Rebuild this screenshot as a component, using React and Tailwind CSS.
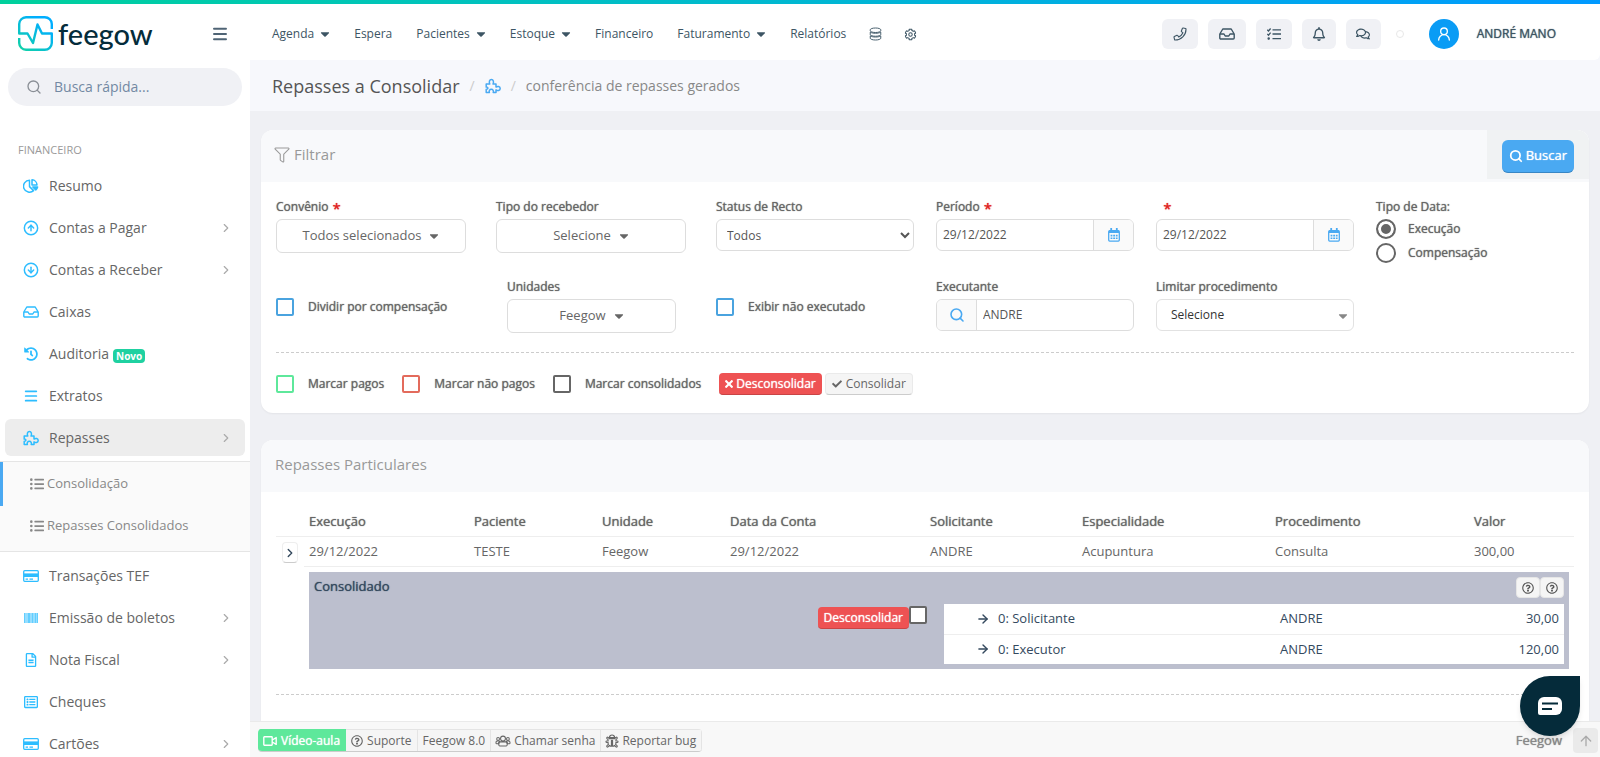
import { useState } from 'react';
import {
  FaBug,
  FaCheck,
  FaCog,
  FaDatabase,
  FaFilter,
  FaHistory,
  FaListUl,
  FaPhone,
  FaRegBell,
  FaRegComments,
  FaRegFileAlt,
  FaRegListAlt,
  FaRegQuestionCircle,
  FaTimes,
  FaUsers,
  FaCaretDown,
} from 'react-icons/fa';
import { ArrowRight, ArrowUp, ChevronRight, CircleArrowDown, CircleArrowUp, Menu, Search, UserRound } from 'lucide-react';

// Outlined version of a solid icon
function Outline({ icon: Icon, className, weight = 48 }) {
  return <Icon fill="none" strokeWidth={weight} className={`overflow-visible ${className}`} />;
}

function PieIcon({ className }) {
  return (
    <svg viewBox="0 0 16 14" className={className} fill="none" stroke="currentColor" strokeWidth="1.5" strokeLinejoin="round">
      <path d="M6.5 1.2A6 6 0 1 0 10.6 11.6L6.5 7.6Z" />
      <path d="M9 .8A5.3 5.3 0 0 1 14 6H9Z" />
      <path d="M9.8 8H14.6A6 6 0 0 1 12.8 11Z" fill="currentColor" />
    </svg>
  );
}

function PuzzleIcon({ className }) {
  return (
    <svg viewBox="0 0 16 15" className={className} fill="none" stroke="currentColor" strokeWidth="1.5" strokeLinejoin="round">
      <path d="M1.2 5.5H4.8C3.8 3.5 4.4 1 6.4 1S9 3.5 8 5.5H11V8.6C12.6 7.4 15.2 7.8 15.2 10S12.6 12.6 11 11.4V14H8.2C8.9 12.4 8 10.8 6.3 10.8S3.7 12.4 4.4 14H1.2V10.8C3.4 11 3.4 8.4 1.2 8.6Z" />
    </svg>
  );
}

function InboxIcon({ className }) {
  return (
    <svg viewBox="0 0 16 12" className={className} fill="none" stroke="currentColor" strokeWidth="1.4" strokeLinejoin="round">
      <path d="M3.8 1H12.2L15.2 6V10A1 1 0 0 1 14.2 11H1.8A1 1 0 0 1 .8 10V6Z" />
      <path d="M1 6H5L6.2 8H9.8L11 6H15" />
    </svg>
  );
}

function CardIcon({ className }) {
  return (
    <svg viewBox="0 0 16 12" className={className} fill="none" stroke="currentColor" strokeWidth="1.3">
      <rect x=".7" y=".7" width="14.6" height="10.6" rx="1" />
      <path d="M1 5.2H15" strokeWidth="3.6" />
      <path d="M2.6 9.2H5M6.5 9.2H10" />
    </svg>
  );
}

function BarcodeIcon({ className }) {
  return (
    <svg viewBox="0 0 14 10" className={className} fill="currentColor">
      <path d="M0 0H14V10H0Z" opacity=".5" />
      <path d="M0 0H1V10H0ZM4 0H6V10H4ZM8 0H9V10H8ZM11 0H12V10H11ZM13 0H14V10H13Z" opacity=".5" />
    </svg>
  );
}

function TasksIcon({ className }) {
  return (
    <svg viewBox="0 0 14 12" className={className} fill="none" stroke="currentColor" strokeWidth="1.3">
      <path d="M5.5 1.8H14M5.5 6H14M5.5 10.6H14M.3 1.8L1.5 3L3.6 .5M.3 6L1.5 7.2L3.6 4.7" />
      <circle cx="1.7" cy="10.6" r=".6" fill="currentColor" />
    </svg>
  );
}

function CalendarIcon({ className }) {
  return (
    <svg viewBox="0 0 12 14" className={className} fill="none" stroke="currentColor" strokeWidth="1.3">
      <rect x=".7" y="2.7" width="10.6" height="10.4" rx="1" />
      <path d="M3.2 0V3M8.8 0V3" strokeWidth="1.8" />
      <path d="M1 3.8H11" strokeWidth="2.4" />
      <path d="M2.6 7.6H9.6M2.6 10.2H9.6" strokeWidth="1.6" strokeDasharray="1.8 .8" />
    </svg>
  );
}

function VideoIcon({ className }) {
  return (
    <svg viewBox="0 0 14 10" className={className} fill="none" stroke="currentColor" strokeWidth="1.4" strokeLinejoin="round">
      <rect x=".8" y=".8" width="8.4" height="8.4" rx=".6" />
      <path d="M9.2 4L13.2 1.6V8.4L9.2 6" />
    </svg>
  );
}

function Logo() {
  return (
    <a href="#inicio" className="flex items-center gap-[5px]">
      <svg viewBox="0 0 35 35" className="w-[35px] h-[35px]" fill="none" stroke="url(#feegow)" strokeWidth="2.4" strokeLinejoin="round">
        <defs>
          <linearGradient id="feegow" x1="0" y1="35" x2="24" y2="6" gradientUnits="userSpaceOnUse">
            <stop offset="0" stopColor="#12d4a0" />
            <stop offset="1" stopColor="#00aeff" />
          </linearGradient>
        </defs>
        <path d="M33.8 13V8a7 7 0 0 0-7-6.8H8A7 7 0 0 0 1.2 8V17.5H9.5L15 27L19.5 8.5L24 17.5H33.8V27a7 7 0 0 1-7 6.8H8A7 7 0 0 1 1.2 27V22" />
      </svg>
      <span className="font-['Lato'] text-[29px] leading-8 font-medium text-[#042c3b]">feegow</span>
    </a>
  );
}

const sidebarTop = [
  { label: 'Resumo', icon: <PieIcon className="w-4 h-3.5" /> },
  { label: 'Contas a Pagar', icon: <CircleArrowUp className="w-4 h-4" strokeWidth={2.2} />, arrow: true },
  { label: 'Contas a Receber', icon: <CircleArrowDown className="w-4 h-4" strokeWidth={2.2} />, arrow: true },
  { label: 'Caixas', icon: <InboxIcon className="w-4 h-3" /> },
  { label: 'Auditoria', icon: <FaHistory className="w-3.5 h-3.5" />, badge: 'Novo' },
  { label: 'Extratos', icon: <Menu className="w-4 h-4" strokeWidth={2.6} /> },
  { label: 'Repasses', icon: <PuzzleIcon className="w-4 h-4" />, arrow: true, active: true },
];

const sidebarBottom = [
  { label: 'Transações TEF', icon: <CardIcon className="w-4 h-3" /> },
  { label: 'Emissão de boletos', icon: <BarcodeIcon className="w-3.5 h-2.5" />, arrow: true },
  { label: 'Nota Fiscal', icon: <FaRegFileAlt className="w-3.5 h-3.5" />, arrow: true },
  { label: 'Cheques', icon: <FaRegListAlt className="w-3.5 h-3.5" /> },
  { label: 'Cartões', icon: <CardIcon className="w-4 h-3" />, arrow: true },
];

const topMenu = [
  { label: 'Agenda', caret: true },
  { label: 'Espera' },
  { label: 'Pacientes', caret: true },
  { label: 'Estoque', caret: true },
  { label: 'Financeiro' },
  { label: 'Faturamento', caret: true },
  { label: 'Relatórios' },
];

function SidebarItem({ item }) {
  return (
    <a
      href="#menu"
      className={`flex items-center h-[37px] mx-[5px] mb-[5px] pl-[17px] pr-3 rounded-md text-sm text-[#666] ${item.active ? 'bg-[#ededed]' : ''}`}
    >
      <span className="w-[18px] mr-[9px] flex justify-center text-[#2dbdff]">{item.icon}</span>
      <span>{item.label}</span>
      {item.badge && (
        <span className="ml-1 mt-1 px-[3px] rounded bg-[#1fd1a1] text-white text-[10px] leading-[14px] font-bold">{item.badge}</span>
      )}
      {item.arrow && <ChevronRight className="ml-auto w-3.5 h-3.5 text-[#aaa]" />}
    </a>
  );
}

function Sidebar() {
  return (
    <aside className="w-[250px] shrink-0 bg-white overflow-hidden">
      <div className="flex items-center justify-between h-[59px] pl-[18px] pr-[21px]">
        <Logo />
        <button type="button" aria-label="Recolher menu" className="text-[#4f6475]">
          <Menu className="w-[18px] h-[18px]" strokeWidth={2.6} />
        </button>
      </div>

      <div className="flex items-center gap-3 h-[38px] mx-2 mt-[5px] pl-[18px] pr-4 rounded-full bg-[#f0f1f5]">
        <Search className="w-4 h-4 shrink-0 text-[#8a8f96]" />
        <input
          type="text"
          aria-label="Busca rápida"
          placeholder="Busca rápida..."
          className="w-full min-w-0 bg-transparent text-sm placeholder:text-[#7389a3] outline-none"
        />
      </div>

      <h2 className="mt-9 mb-[9px] pl-[18px] text-[11px] leading-4 text-[#9a9a9a]">FINANCEIRO</h2>

      <nav>
        {sidebarTop.map((item) => (
          <SidebarItem key={item.label} item={item} />
        ))}
        <div className="h-[91px] mb-[5px] border-y border-[#e5e5e5] bg-[#fafafa] text-[13px] text-[#888]">
          <a href="#consolidacao" className="flex items-center gap-[3px] h-11 pl-[27px] border-l-3 border-[#4aa9f2]">
            <FaListUl className="w-3.5 h-3.5" /> Consolidação
          </a>
          <a href="#consolidados" className="flex items-center gap-[3px] h-10 pl-[30px]">
            <FaListUl className="w-3.5 h-3.5" /> Repasses Consolidados
          </a>
        </div>
        {sidebarBottom.map((item) => (
          <SidebarItem key={item.label} item={item} />
        ))}
      </nav>
    </aside>
  );
}

function Header() {
  return (
    <header className="flex items-center h-14 pt-1 pl-[22px] pr-11 bg-white rounded-br-md text-xs text-[#3d5564]">
      <nav className="flex items-center gap-6">
        {topMenu.map((item) => (
          <a key={item.label} href="#nav" className="flex items-center gap-1.5">
            {item.label}
            {item.caret && <FaCaretDown className="w-2.5 h-3.5" />}
          </a>
        ))}
        <a href="#dados" aria-label="Dados"><Outline icon={FaDatabase} className="w-[11px] h-3" weight={40} /></a>
        <a href="#config" aria-label="Configurações"><Outline icon={FaCog} className="w-[11px] h-[11px]" /></a>
      </nav>

      <div className="ml-auto flex items-center gap-2.5">
        <button type="button" aria-label="Telefone" className="flex items-center justify-center w-9 h-[30px] rounded-md bg-[#f0f1f5]">
          <Outline icon={FaPhone} className="w-3 h-3" />
        </button>
        <button type="button" aria-label="Caixa" className="flex items-center justify-center w-[38px] h-[30px] rounded-md bg-[#f0f1f5]">
          <InboxIcon className="w-4 h-3" />
        </button>
        <button type="button" aria-label="Tarefas" className="flex items-center justify-center w-9 h-[30px] rounded-md bg-[#f0f1f5]">
          <TasksIcon className="w-3.5 h-3" />
        </button>
        <button type="button" aria-label="Notificações" className="flex items-center justify-center w-[34px] h-[30px] rounded-md bg-[#f0f1f5]">
          <FaRegBell className="w-3.5 h-3.5" />
        </button>
        <button type="button" aria-label="Mensagens" className="flex items-center justify-center w-[35px] h-[30px] rounded-md bg-[#f0f1f5]">
          <FaRegComments className="w-3.5 h-3.5" />
        </button>
        <span className="ml-[5px] w-2 h-2 rounded-full border border-[#e8e8e8]" />
        <a href="#perfil" className="ml-[15px] flex items-center gap-[18px] text-xs font-medium [text-shadow:0_0_1px_currentColor]">
          <span className="flex items-center justify-center w-[30px] h-[30px] rounded-full bg-[#0a9cf5] text-white">
            <UserRound className="w-4 h-4" />
          </span>
          ANDRÉ MANO
        </a>
      </div>
    </header>
  );
}

function Panel({ title, icon, action, children }) {
  return (
    <section className="bg-white rounded-xl overflow-hidden shadow-xs">
      <div className="flex items-start justify-between h-[52px] bg-[#f8f9fb]">
        <h2 className="flex items-center gap-[5px] h-[49px] pl-3.5 text-[15px] text-[#999]">
          {icon}
          {title}
        </h2>
        {action}
      </div>
      {children}
    </section>
  );
}

function Field({ label, htmlFor, required, children }) {
  return (
    <div className="min-w-0">
      <label htmlFor={htmlFor} className="flex gap-1 h-[18px] mb-[3px] text-[12px] leading-[18px] font-medium text-[#666] [text-shadow:0_0_1px_currentColor]">
        {label} {required && <span className="text-[15px] leading-5 font-medium text-[#e02020]">*</span>}
      </label>
      {children}
    </div>
  );
}

function MultiButton({ id, text }) {
  return (
    <button id={id} type="button" className="flex items-center justify-center gap-2 w-full h-[34px] border border-[#ddd] rounded-md text-[13px] text-[#666]">
      {text} <FaCaretDown className="w-2.5 h-3.5" />
    </button>
  );
}

function DateInput({ id, label }) {
  const [value, setValue] = useState('29/12/2022');

  return (
    <div className="flex h-8 border border-[#ddd] rounded-md overflow-hidden">
      <input
        id={id}
        type="text"
        aria-label={label}
        value={value}
        onChange={(e) => setValue(e.target.value)}
        className="flex-1 min-w-0 px-1.5 text-xs text-[#555] outline-none"
      />
      <button type="button" aria-label="Abrir calendário" className="flex items-center justify-center w-10 border-l border-[#ddd] bg-[#fafafa] text-[#4aa9f2]">
        <CalendarIcon className="w-3 h-3.5" />
      </button>
    </div>
  );
}

function Check({ label, className }) {
  return (
    <label className="flex items-center gap-3.5 text-[12px] leading-[18px] font-medium text-[#666] [text-shadow:0_0_1px_currentColor]">
      <input type="checkbox" className={`appearance-none w-[18px] h-[18px] shrink-0 border-2 rounded-[2px] bg-white ${className}`} />
      {label}
    </label>
  );
}

function Filters() {
  const [dateType, setDateType] = useState('Execução');

  return (
    <Panel
      title="Filtrar"
      icon={<Outline icon={FaFilter} className="w-3.5 h-3.5" weight={40} />}
      action={
        <div className="flex items-center h-[49px] px-[15px] bg-[#f0f2f3]">
          <button type="button" className="flex items-center gap-[3px] h-[33px] px-[7px] mt-1 rounded-md bg-[#4aa9f2] border-b border-[#3886c4] text-[13px] font-medium text-white [text-shadow:0_0_1px_currentColor]">
            <Search className="w-3.5 h-3.5" strokeWidth={3} /> Buscar
          </button>
        </div>
      }
    >
      <form className="px-[15px] pt-4 pb-[18px]">
        <div className="grid grid-cols-6 gap-x-[22px] gap-y-[11px]">
          <Field label="Convênio" htmlFor="convenio" required>
            <div className="pr-2"><MultiButton id="convenio" text="Todos selecionados" /></div>
          </Field>
          <Field label="Tipo do recebedor" htmlFor="recebedor">
            <div className="pr-2"><MultiButton id="recebedor" text="Selecione" /></div>
          </Field>
          <Field label="Status de Recto" htmlFor="status">
            <select id="status" className="w-full h-8 px-1.5 border border-[#ddd] rounded-md bg-white text-xs text-[#555]">
              <option>Todos</option>
            </select>
          </Field>
          <Field label="Período" htmlFor="de" required>
            <DateInput id="de" />
          </Field>
          <Field label={<>&nbsp;</>} htmlFor="ate" required>
            <DateInput id="ate" label="Até" />
          </Field>
          <fieldset className="text-[12px] leading-[18px] font-medium text-[#666] [text-shadow:0_0_1px_currentColor]">
            <legend className="mb-[3px]">Tipo de Data:</legend>
            {['Execução', 'Compensação'].map((type) => (
              <label key={type} className="flex items-center gap-3 h-5 mb-1">
                <input
                  type="radio"
                  name="tipoData"
                  checked={dateType === type}
                  onChange={() => setDateType(type)}
                  className="appearance-none w-5 h-5 border-2 border-[#666] rounded-full checked:bg-[#666] checked:shadow-[inset_0_0_0_3px_#fff]"
                />
                {type}
              </label>
            ))}
          </fieldset>

          <div className="pt-5"><Check label="Dividir por compensação" className="border-[#4aa3df]" /></div>
          <div className="pl-[11px] pr-[18px]">
            <Field label="Unidades" htmlFor="unidades">
              <MultiButton id="unidades" text="Feegow" />
            </Field>
          </div>
          <div className="pt-5"><Check label="Exibir não executado" className="border-[#4aa3df]" /></div>
          <Field label="Executante" htmlFor="executante">
            <div className="flex h-8 border border-[#ddd] rounded-md overflow-hidden">
              <span className="flex items-center justify-center w-10 border-r border-[#ddd] bg-[#fafafa] text-[#4aa9f2]">
                <Search className="w-4 h-4" strokeWidth={2.4} />
              </span>
              <input id="executante" type="text" defaultValue="ANDRE" className="flex-1 min-w-0 px-1.5 text-xs text-[#555] outline-none" />
            </div>
          </Field>
          <Field label="Limitar procedimento" htmlFor="procedimento">
            <div className="relative">
              <select id="procedimento" className="appearance-none w-full h-8 px-3.5 border border-[#e2e2e2] rounded-md bg-white text-xs text-[#333]">
                <option>Selecione</option>
              </select>
              <FaCaretDown className="absolute right-1.5 top-2.5 w-2.5 h-3.5 text-[#888] pointer-events-none" />
            </div>
          </Field>
        </div>

        <hr className="mt-[19px] mb-5 border-dashed border-[#ccc]" />

        <div className="flex items-center gap-[18px]">
          <Check label="Marcar pagos" className="border-[#5ee89b]" />
          <Check label="Marcar não pagos" className="border-[#e36b5c]" />
          <Check label="Marcar consolidados" className="border-[#666]" />
          <div className="flex gap-[3px] text-xs">
            <button type="button" className="flex items-center gap-[3px] h-[22px] px-1.5 rounded bg-[#ee5253] border-b border-[#c94445] font-medium text-white [text-shadow:0_0_1px_currentColor]">
              <FaTimes className="w-2 h-3" /> Desconsolidar
            </button>
            <button type="button" className="flex items-center gap-1 h-[22px] px-1.5 rounded bg-[#f5f5f5] border border-[#eaeaea] border-b-[#ccc] text-[#666]">
              <FaCheck className="w-2.5 h-2.5" /> Consolidar
            </button>
          </div>
        </div>
      </form>
    </Panel>
  );
}

function Transfers() {
  return (
    <Panel title="Repasses Particulares">
      <div className="px-[15px] pt-[15px] pb-12">
        <table className="w-full table-fixed text-left text-[13px] leading-[19px] text-[#666]">
          <thead>
            <tr className="border-b border-[#eee] *:p-[5px] *:font-medium [text-shadow:0_0_1px_currentColor]">
              <th className="w-7" aria-label="Detalhes" />
              <th className="w-[165px]">Execução</th>
              <th className="w-32">Paciente</th>
              <th className="w-32">Unidade</th>
              <th className="w-[200px]">Data da Conta</th>
              <th className="w-[152px]">Solicitante</th>
              <th className="w-[193px]">Especialidade</th>
              <th className="w-[199px]">Procedimento</th>
              <th>Valor</th>
            </tr>
          </thead>
          <tbody>
            <tr>
              <td rowSpan={2} className="align-top p-[5px]">
                <button type="button" aria-label="Expandir" className="flex items-center justify-center w-4 h-[21px] ml-px rounded bg-white border border-[#eee] border-b-[#ccc] text-[#34495e]">
                  <ChevronRight className="w-3.5 h-3.5 shrink-0" strokeWidth={2.4} />
                </button>
              </td>
              {['29/12/2022', 'TESTE', 'Feegow', '29/12/2022', 'ANDRE', 'Acupuntura', 'Consulta', '300,00'].map((text, i) => (
                <td key={i} className="p-[5px] border-b border-[#eee]">{text}</td>
              ))}
            </tr>
            <tr>
              <td colSpan={8} className="p-[5px]">
                <div className="p-[5px] bg-[#bcbfce] text-[#34495e]">
                  <div className="flex justify-between h-[22px] mb-[5px]">
                    <strong className="font-medium [text-shadow:0_0_1px_currentColor]">Consolidado</strong>
                    <div className="flex text-[#555]">
                      {[1, 2].map((n) => (
                        <button key={n} type="button" aria-label="Ajuda" className="flex items-center justify-center w-6 h-[21px] rounded bg-[#f5f5f5] border border-[#e6e6e6]">
                          <FaRegQuestionCircle className="w-3 h-3" />
                        </button>
                      ))}
                    </div>
                  </div>
                  <div className="flex items-start justify-end">
                    <button type="button" className="h-[22px] mt-[3px] px-1.5 rounded bg-[#ee5253] border-b border-[#c94445] text-xs font-medium text-white [text-shadow:0_0_1px_currentColor]">
                      Desconsolidar
                    </button>
                    <input type="checkbox" aria-label="Selecionar" className="appearance-none w-[18px] h-[18px] mt-0.5 mr-[17px] border-2 border-[#666] rounded-[2px] bg-white" />
                    <table className="w-[620px] bg-white">
                      <tbody>
                        {[['Solicitante', '30,00'], ['Executor', '120,00']].map(([role, value]) => (
                          <tr key={role} className="h-[30px] border-b border-[#eee] last:border-0 *:py-[5px]">
                            <td className="w-[336px] pl-8">
                              <span className="flex items-center gap-2"><ArrowRight className="w-3.5 h-3.5" strokeWidth={2.4} /> 0: {role}</span>
                            </td>
                            <td>ANDRE</td>
                            <td className="pr-[5px] text-right">{value}</td>
                          </tr>
                        ))}
                      </tbody>
                    </table>
                  </div>
                </div>
              </td>
            </tr>
          </tbody>
        </table>
        <hr className="mt-5 border-dashed border-[#ccc]" />
      </div>
    </Panel>
  );
}

function Footer() {
  return (
    <footer className="flex items-center h-9 shrink-0 pl-2 pr-0.5 pt-0.5 border-t border-[#eaeaea] bg-[#f8f8f8] text-xs text-[#666]">
      <div className="flex rounded overflow-hidden border-b border-[#ccc] *:flex *:items-center *:gap-1 *:h-[22px] *:px-[5px] *:border-t *:border-r">
        <button type="button" className="bg-[#5ee89b] border-[#5ee89b] font-medium text-white [text-shadow:0_0_1px_currentColor]"><VideoIcon className="w-3.5 h-2.5" /> Vídeo-aula</button>
        <button type="button" className="bg-[#f5f5f5] border-[#e4e4e4]"><FaRegQuestionCircle className="w-3 h-3" /> Suporte</button>
        <button type="button" className="bg-[#f5f5f5] border-[#e4e4e4]">Feegow 8.0</button>
        <button type="button" className="bg-[#f5f5f5] border-[#e4e4e4]"><Outline icon={FaUsers} className="w-3.5 h-3.5" /> Chamar senha</button>
        <button type="button" className="bg-[#f5f5f5] border-[#e4e4e4]"><Outline icon={FaBug} className="w-3 h-3" /> Reportar bug</button>
      </div>
      <span className="ml-auto mr-[11px] text-[13px] font-medium text-[#888] [text-shadow:0_0_1px_currentColor]">Feegow</span>
      <button type="button" aria-label="Voltar ao topo" className="flex items-center justify-center w-[25px] h-[25px] rounded-sm bg-[#eaeaea] text-[#aaa]">
        <ArrowUp className="w-4 h-4" />
      </button>
    </footer>
  );
}

export default function App() {
  return (
    <div className="flex flex-col h-screen overflow-hidden bg-[#eff0f4] font-['Open_Sans',sans-serif]">
      <div className="h-1 shrink-0 bg-linear-to-r from-[#00d09c] to-[#0099ff]" />
      <div className="flex flex-1 min-h-0">
        <Sidebar />
        <div className="flex flex-col flex-1 min-w-0">
          <div className="bg-[#f7f8fc]">
            <Header />
            <div className="flex items-center gap-2.5 h-[51px] pl-[22px] text-[#ccc]">
              <h1 className="text-lg text-[#555]">Repasses a Consolidar</h1>
              <span className="text-sm">/</span>
              <PuzzleIcon className="w-4 h-4 text-[#4aa9f2]" />
              <span className="text-sm">/</span>
              <span className="text-sm text-[#888]">conferência de repasses gerados</span>
            </div>
          </div>
          <main className="flex flex-col gap-[27px] flex-1 min-h-0 overflow-hidden pt-[19px] px-[11px] *:shrink-0">
            <Filters />
            <Transfers />
          </main>
          <Footer />
        </div>
      </div>

      {/* Chat launcher */}
      <button type="button" aria-label="Abrir chat" className="fixed right-5 bottom-[21px] flex items-center justify-center w-[60px] h-[60px] rounded-full rounded-tr-md bg-[#052b3a] shadow-md">
        <svg viewBox="0 0 24 18" className="w-6 h-[18px]">
          <path d="M6 0H18A6 6 0 0 1 24 6V12A6 6 0 0 1 18 18H2A2 2 0 0 1 0 16V6A6 6 0 0 1 6 0Z" fill="#fff" />
          <path d="M4 6.5H20M4 12H14" stroke="#052b3a" strokeWidth="2" />
        </svg>
      </button>
    </div>
  );
}
